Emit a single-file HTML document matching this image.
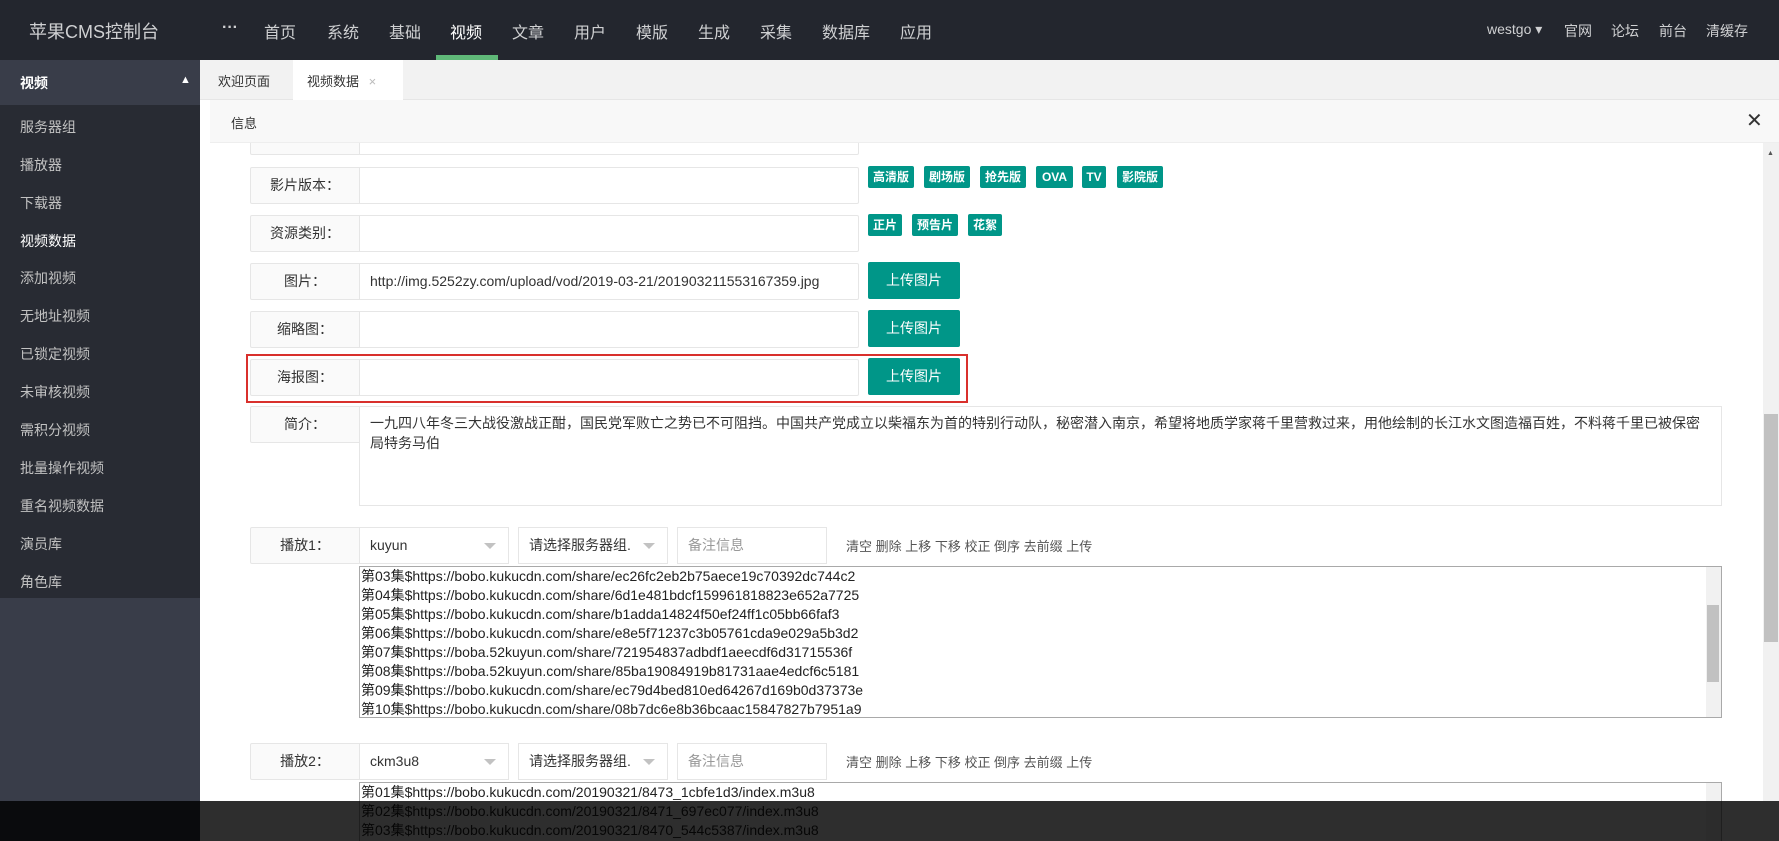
<!DOCTYPE html>
<html style="overflow:hidden;height:841px"><head><meta charset="utf-8"><style>
*{margin:0;padding:0;box-sizing:border-box}
body{width:1779px;height:841px;overflow:hidden;position:relative;background:#fff;font-family:"Liberation Sans","Noto Sans CJK SC",sans-serif;font-size:14px;color:#333}
.abs{position:absolute}
#hd{left:0;top:0;width:1779px;height:60px;background:#23262e;color:#ddd}
#hd span{position:absolute;top:19px;font-size:16px;color:#cfd0d2}
#side{left:0;top:60px;width:200px;height:781px;background:#393d49}
#side .list{position:absolute;left:0;top:0;width:200px;height:538px;background:#282b33}
#side .list div{position:absolute;left:20px;font-size:14px;color:#c2c2c2}
.lab{position:absolute;left:250px;width:110px;height:37px;border:1px solid #e6e6e6;background:#fafafa;text-align:center;line-height:35px;font-size:14px;border-radius:2px 0 0 2px}
.inp{position:absolute;left:359px;width:500px;height:37px;border:1px solid #e6e6e6;background:#fff;line-height:35px;padding-left:10px;font-size:14px;border-radius:0 2px 2px 0;overflow:hidden;white-space:nowrap}
.btn{position:absolute;left:868px;width:92px;height:37px;background:#009688;color:#fff;text-align:center;line-height:37px;font-size:14px;border-radius:2px}
.tag{position:absolute;height:22px;background:#009688;color:#fff;font-size:12px;line-height:22px;text-align:center;border-radius:2px;font-weight:bold}
.sel{position:absolute;height:37px;border:1px solid #e6e6e6;line-height:35px;padding-left:10px;font-size:14px;background:#fff}
.sel i{position:absolute;right:12px;top:15px;border:6px solid transparent;border-top-color:#c2c2c2;border-bottom:0}
.ta{position:absolute;left:359px;width:1363px;border:1px solid #a9a9a9;font-size:14px;line-height:19px;overflow:hidden;white-space:nowrap;color:#222}
.ops{position:absolute;left:846px;font-size:13px;color:#555}
</style></head><body>
<div id="hd" class="abs">
<span style="left:29px;font-size:18px;top:18px">苹果CMS控制台</span>
<span style="left:222px;font-weight:bold">···</span>
<span style="left:264px">首页</span><span style="left:327px">系统</span><span style="left:389px">基础</span><span style="left:450px;color:#fff">视频</span><span style="left:512px">文章</span><span style="left:574px">用户</span><span style="left:636px">模版</span><span style="left:698px">生成</span><span style="left:760px">采集</span><span style="left:822px">数据库</span><span style="left:900px">应用</span>
<div class="abs" style="left:436px;top:55px;width:62px;height:5px;background:#5fb878"></div>
<span style="left:1487px;font-size:14px;top:21px">westgo ▾</span>
<span style="left:1564px;font-size:14px;top:21px">官网</span><span style="left:1611px;font-size:14px;top:21px">论坛</span><span style="left:1659px;font-size:14px;top:21px">前台</span><span style="left:1706px;font-size:14px;top:21px">清缓存</span>
</div>
<div id="side" class="abs"><div class="list">
<div style="left:0;top:0;width:200px;height:45px;background:#393d49"></div>
<div style="top:13px;color:#fff;font-weight:bold">视频</div>
<div style="left:180px;top:14px;color:#fff;font-size:11px">▲</div>
<div style="top:57px">服务器组</div><div style="top:95px">播放器</div><div style="top:133px">下载器</div><div style="top:171px;color:#fff">视频数据</div><div style="top:208px">添加视频</div><div style="top:246px">无地址视频</div><div style="top:284px">已锁定视频</div><div style="top:322px">未审核视频</div><div style="top:360px">需积分视频</div><div style="top:398px">批量操作视频</div><div style="top:436px">重名视频数据</div><div style="top:474px">演员库</div><div style="top:512px">角色库</div>
</div></div>
<div class="abs" style="left:200px;top:60px;width:1579px;height:40px;background:#f2f2f2;border-bottom:1px solid #e6e6e6"></div>
<div class="abs" style="left:218px;top:71px;font-size:13px">欢迎页面</div>
<div class="abs" style="left:293px;top:60px;width:110px;height:41px;background:#fff;font-size:13px;padding:11px 0 0 14px">视频数据 <span style="color:#bbb;margin-left:6px">×</span></div>

<div class="lab" style="top:118px"></div><div class="inp" style="top:118px"></div>
<div class="abs" style="left:210px;top:100px;width:1569px;height:43px;background:#f8f8f8;border-bottom:1px solid #eee"></div>
<div class="abs" style="left:231px;top:113px;font-size:13px">信息</div>
<div class="abs" style="left:1746px;top:108px;font-size:20px;color:#333">✕</div>
<div class="abs" style="left:1763px;top:143px;width:16px;height:658px;background:#f1f1f1"></div>
<div class="abs" style="left:1764px;top:414px;width:14px;height:228px;background:#c1c1c1"></div>
<div class="abs" style="left:1767px;top:150px;font-size:7px;color:#555">▲</div>

<div class="lab" style="top:167px">影片版本：</div><div class="inp" style="top:167px"></div>
<div class="tag" style="left:868px;top:166px;width:46px">高清版</div><div class="tag" style="left:924px;top:166px;width:46px">剧场版</div><div class="tag" style="left:980px;top:166px;width:46px">抢先版</div><div class="tag" style="left:1036px;top:166px;width:37px">OVA</div><div class="tag" style="left:1082px;top:166px;width:24px">TV</div><div class="tag" style="left:1117px;top:166px;width:46px">影院版</div>
<div class="lab" style="top:215px">资源类别：</div><div class="inp" style="top:215px"></div>
<div class="tag" style="left:868px;top:214px;width:34px">正片</div><div class="tag" style="left:912px;top:214px;width:46px">预告片</div><div class="tag" style="left:968px;top:214px;width:34px">花絮</div>
<div class="lab" style="top:263px">图片：</div><div class="inp" style="top:263px">http://img.5252zy.com/upload/vod/2019-03-21/201903211553167359.jpg</div><div class="btn" style="top:262px">上传图片</div>
<div class="lab" style="top:311px">缩略图：</div><div class="inp" style="top:311px"></div><div class="btn" style="top:310px">上传图片</div>
<div class="lab" style="top:359px">海报图：</div><div class="inp" style="top:359px"></div><div class="btn" style="top:358px">上传图片</div>
<div class="abs" style="left:246px;top:354px;width:722px;height:49px;border:2px solid #d9302c"></div>
<div class="lab" style="top:406px">简介：</div>
<div class="abs" style="left:359px;top:406px;width:1363px;height:100px;border:1px solid #e6e6e6;padding:6px 10px;font-size:14px;line-height:20px;color:#333">一九四八年冬三大战役激战正酣，国民党军败亡之势已不可阻挡。中国共产党成立以柴福东为首的特别行动队，秘密潜入南京，希望将地质学家蒋千里营救过来，用他绘制的长江水文图造福百姓，不料蒋千里已被保密局特务马伯</div>

<div class="lab" style="top:527px">播放1：</div>
<div class="sel" style="left:359px;top:527px;width:150px">kuyun<i></i></div>
<div class="sel" style="left:518px;top:527px;width:150px">请选择服务器组.<i></i></div>
<div class="sel" style="left:677px;top:527px;width:150px;color:#999">备注信息</div>
<div class="ops" style="top:536px">清空 删除 上移 下移 校正 倒序 去前缀 上传</div>
<div class="ta" style="top:566px;height:152px;padding:0 1px">第03集$https://bobo.kukucdn.com/share/ec26fc2eb2b75aece19c70392dc744c2<br>第04集$https://bobo.kukucdn.com/share/6d1e481bdcf159961818823e652a7725<br>第05集$https://bobo.kukucdn.com/share/b1adda14824f50ef24ff1c05bb66faf3<br>第06集$https://bobo.kukucdn.com/share/e8e5f71237c3b05761cda9e029a5b3d2<br>第07集$https://boba.52kuyun.com/share/721954837adbdf1aeecdf6d31715536f<br>第08集$https://boba.52kuyun.com/share/85ba19084919b81731aae4edcf6c5181<br>第09集$https://bobo.kukucdn.com/share/ec79d4bed810ed64267d169b0d37373e<br>第10集$https://bobo.kukucdn.com/share/08b7dc6e8b36bcaac15847827b7951a9</div>
<div class="abs" style="left:1706px;top:567px;width:15px;height:150px;background:#f1f1f1"></div>
<div class="abs" style="left:1707px;top:605px;width:12px;height:77px;background:#c1c1c1"></div>

<div class="lab" style="top:743px">播放2：</div>
<div class="sel" style="left:359px;top:743px;width:150px">ckm3u8<i></i></div>
<div class="sel" style="left:518px;top:743px;width:150px">请选择服务器组.<i></i></div>
<div class="sel" style="left:677px;top:743px;width:150px;color:#999">备注信息</div>
<div class="ops" style="top:752px">清空 删除 上移 下移 校正 倒序 去前缀 上传</div>
<div class="ta" style="top:782px;height:59px;padding:0 1px;border-bottom:0">第01集$https://bobo.kukucdn.com/20190321/8473_1cbfe1d3/index.m3u8<br>第02集$https://bobo.kukucdn.com/20190321/8471_697ec077/index.m3u8<br>第03集$https://bobo.kukucdn.com/20190321/8470_544c5387/index.m3u8</div>
<div class="abs" style="left:1706px;top:783px;width:15px;height:58px;background:#f1f1f1"></div>
<div class="abs" style="left:0;top:801px;width:1779px;height:40px;background:rgba(0,0,0,0.82)"></div>
</body></html>
